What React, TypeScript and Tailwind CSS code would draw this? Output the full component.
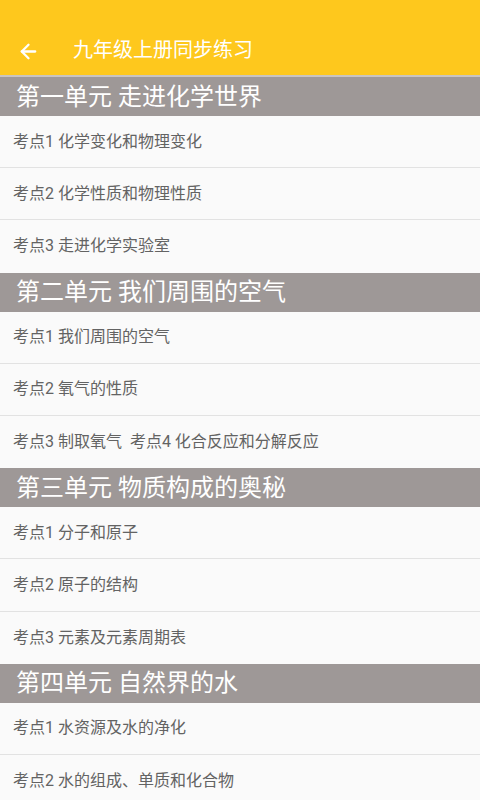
import { ArrowLeft } from 'lucide-react';

const units = [
    {
        title: '第一单元 走进化学世界',
        items: ['考点1 化学变化和物理变化', '考点2 化学性质和物理性质', '考点3 走进化学实验室'],
    },
    {
        title: '第二单元 我们周围的空气',
        items: ['考点1 我们周围的空气', '考点2 氧气的性质', '考点3 制取氧气  考点4 化合反应和分解反应'],
    },
    {
        title: '第三单元 物质构成的奥秘',
        items: ['考点1 分子和原子', '考点2 原子的结构', '考点3 元素及元素周期表'],
    },
    {
        title: '第四单元 自然界的水',
        items: ['考点1 水资源及水的净化', '考点2 水的组成、单质和化合物'],
    },
];

export default function App() {
    return (
        <div
            className="w-[480px] h-[800px] overflow-hidden bg-[#fafafa]"
            style={{ fontFamily: 'Roboto, "Noto Sans CJK SC", sans-serif' }}
        >
            {/* toolbar */}
            <div className="h-[75px] bg-[#fec81d] flex items-end pb-[12px]">
                <div className="w-[73px] flex items-center pl-[17px]">
                    <ArrowLeft className="w-[23px] h-[23px] text-white" strokeWidth={2.4} />
                </div>
                <span className="text-[20px] leading-[26px] text-white">九年级上册同步练习</span>
            </div>
            <div className="h-[2px] bg-[#c9c4c0]" />

            {units.map((unit) => (
                <div key={unit.title}>
                    <div className="h-[39px] bg-[#9e9897] flex items-center pl-[16px]">
                        <span className="text-[24px] leading-none text-white">{unit.title}</span>
                    </div>
                    {unit.items.map((item, i) => (
                        <div
                            key={item}
                            className={
                                'h-[52.2px] flex items-center pl-[13px] ' +
                                (i < unit.items.length - 1 ? 'border-b border-[#e2e2e2]' : '')
                            }
                        >
                            <span className="text-[16px] text-[#636363] whitespace-pre">{item}</span>
                        </div>
                    ))}
                </div>
            ))}
        </div>
    );
}
